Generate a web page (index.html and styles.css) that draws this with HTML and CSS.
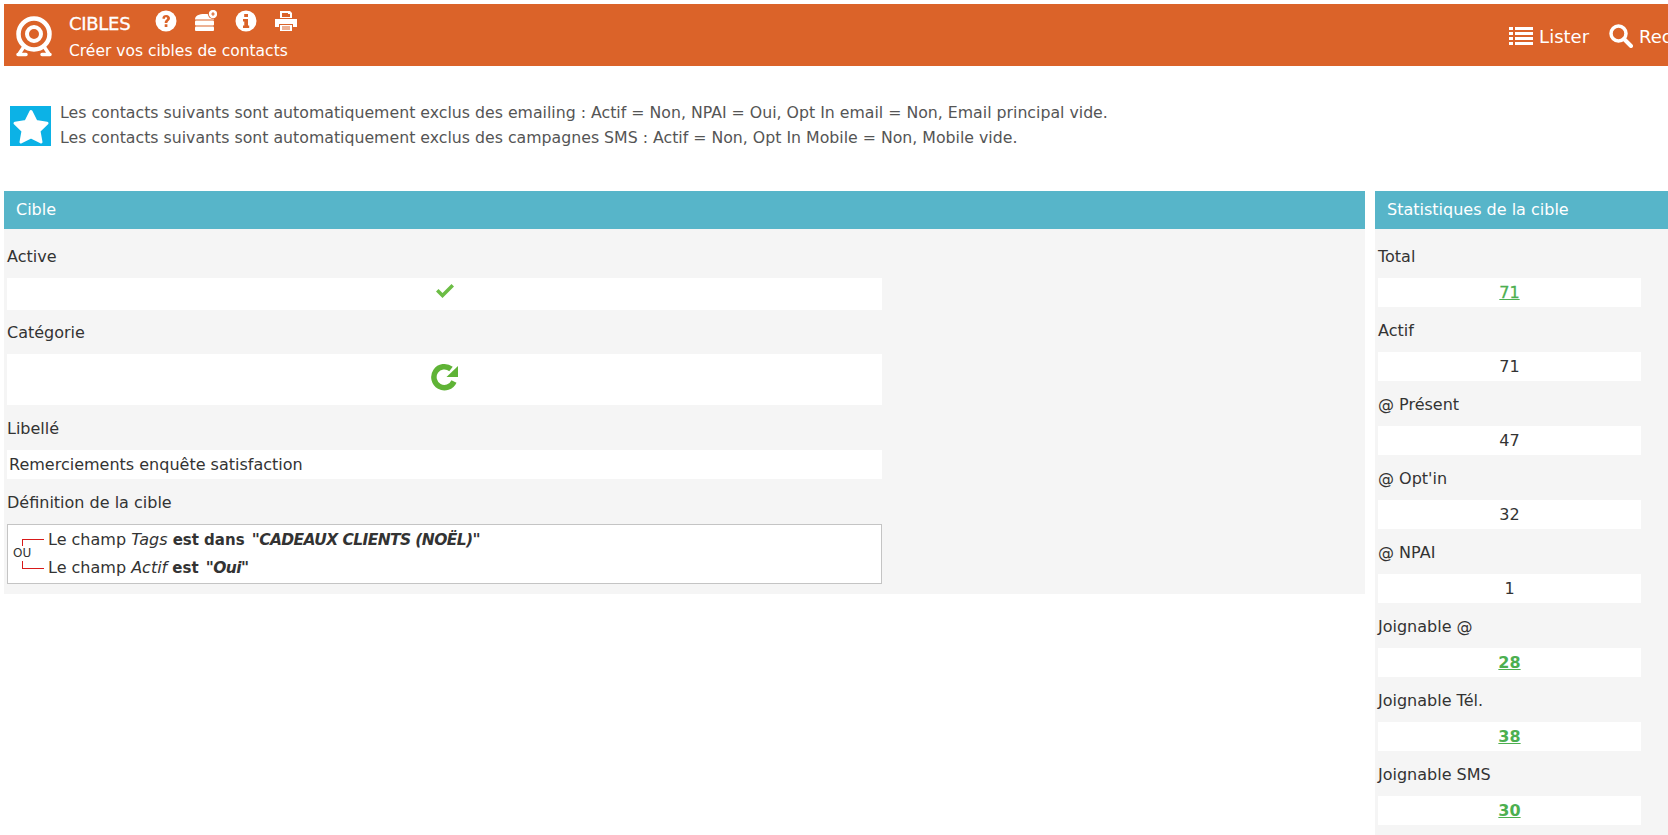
FILE: index.html
```html
<!DOCTYPE html>
<html lang="fr">
<head>
  <meta charset="UTF-8" />
  <title>Cibles</title>
  <link rel="stylesheet" href="styles.css">
</head>
<body>

<div class="page">
  <header class="topbar">
    <svg class="logo" viewBox="0 0 40 44">
      <circle cx="20" cy="19" r="15.5" fill="none" stroke="#fff" stroke-width="4.5"/>
      <circle cx="20" cy="19" r="7" fill="none" stroke="#fff" stroke-width="4"/>
      <path d="M9 33 L5 39 M31 33 L35 39 M4 39.500 H12 M28 39.500 H36" fill="none" stroke="#fff" stroke-width="3.500" stroke-linecap="round"/>
    </svg>
    <div class="titles">
      <div class="title-row">
        <h1>CIBLES</h1>
        <div class="tools">
          <svg viewBox="0 0 22 22"><circle cx="11" cy="11" r="10.500" fill="#fff"/><path d="M7.300 8.500C7.500 6 9 5 11.200 5 13.500 5 15 6.300 15 8.200 15 10.800 12.400 10.800 12.400 13H9.700C9.700 9.800 12.200 9.800 12.200 8.300 12.200 7.500 11.700 7.200 11 7.200 10.200 7.200 9.800 7.800 9.700 8.900ZM9.700 14.300H12.400V17H9.700Z" fill="#db6329"/></svg>
          <svg viewBox="0 0 22 22"><path d="M0 9.500C0 5.500 4 4 9.500 4S19 5.500 19 9.500Z" fill="#fff"/><rect x="0" y="10.500" width="19" height="5" rx="1" fill="#fff"/><rect x="0" y="16.500" width="19" height="4.500" rx="1" fill="#fff"/><circle cx="18" cy="4" r="5" fill="#db6329"/><circle cx="18" cy="4" r="4.200" fill="#fff"/><path d="M16.300 4H19.700M18 2.300V5.700" stroke="#db6329" stroke-width="1.200"/></svg>
          <svg viewBox="0 0 22 22"><circle cx="11" cy="11" r="10.500" fill="#fff"/><path d="M9.200 4H13V7H9.200ZM8 9H13V15.500H14.200V18H8V15.500H9.300V11.500H8Z" fill="#db6329"/></svg>
          <svg viewBox="0 0 22 22"><path d="M5 1H15L17 3V8H5ZM0 9H22V17H18V14H4V17H0ZM5 15H17V21H5Z" fill="#fff"/><path d="M7 3V7H15V4H13V3Z" fill="#db6329"/><path d="M7 17H15M7 19H15" stroke="#db6329"/></svg>
        </div>
      </div>
      <p>Créer vos cibles de contacts</p>
    </div>
    <nav class="actions">
      <a href="#"><svg class="list-icon" viewBox="0 0 24 20"><path d="M0 1H4V4H0ZM6 1H24V4H6ZM0 6H4V9H0ZM6 6H24V9H6ZM0 11H4V14H0ZM6 11H24V14H6ZM0 16H4V19H0ZM6 16H24V19H6Z" fill="#fff"/></svg>Lister</a>
      <a href="#"><svg class="search-icon" viewBox="0 0 24 24"><circle cx="9.500" cy="9.500" r="7.500" fill="none" stroke="#fff" stroke-width="3.500"/><path d="M15 15L22 22" stroke="#fff" stroke-width="4" stroke-linecap="round"/></svg>Rechercher</a>
    </nav>
  </header>

  <div class="notice">
    <div class="notice-icon">
      <svg viewBox="0 0 40 38"><path d="M20 4.500L25 14.500 36 16.200 28 24 30 35 20 29.800 10 35 12 24 4 16.200 15 14.500Z" fill="#fff" stroke="#fff" stroke-width="3" stroke-linejoin="round"/></svg>
    </div>
    <div class="notice-text">
      <p>Les contacts suivants sont automatiquement exclus des emailing : Actif = Non, NPAI = Oui, Opt In email = Non, Email principal vide.</p>
      <p>Les contacts suivants sont automatiquement exclus des campagnes SMS : Actif = Non, Opt In Mobile = Non, Mobile vide.</p>
    </div>
  </div>

  <div class="columns">
    <section class="panel panel-main">
      <h2>Cible</h2>
      <div class="fields">
        <label>Active</label>
        <div class="value value-check">
          <svg class="check" viewBox="0 0 20 16"><path d="M1 8.500L7.500 15 19 3.500 16.500 1 7.500 10 3.500 6Z" fill="#6cbd45"/></svg>
        </div>
        <label>Catégorie</label>
        <div class="value value-icon">
          <svg class="refresh" viewBox="0 0 30 30"><path d="M24 20.500A10.500 10.500 0 1 1 21 8" fill="none" stroke="#5fb336" stroke-width="5.500"/><path d="M28 5V16H16.500Z" fill="#5fb336"/></svg>
        </div>
        <label>Libellé</label>
        <div class="value value-text">Remerciements enquête satisfaction</div>
        <label>Définition de la cible</label>
        <div class="definition">
          <div class="bracket"><span>OU</span></div>
          <div class="rules">
            <div>Le champ <i>Tags</i> <b>est dans</b> <b class="quoted"><i>"CADEAUX CLIENTS (NOËL)"</i></b></div>
            <div>Le champ <i>Actif</i> <b>est</b> <b class="quoted"><i>"Oui"</i></b></div>
          </div>
        </div>
      </div>
    </section>

    <section class="panel panel-stats">
      <h2>Statistiques de la cible</h2>
      <div class="fields stats">
        <label>Total</label>
        <div class="stat"><a href="#" class="light">71</a></div>
        <label>Actif</label>
        <div class="stat">71</div>
        <label>@ Présent</label>
        <div class="stat">47</div>
        <label>@ Opt'in</label>
        <div class="stat">32</div>
        <label>@ NPAI</label>
        <div class="stat">1</div>
        <label>Joignable @</label>
        <div class="stat"><a href="#">28</a></div>
        <label>Joignable Tél.</label>
        <div class="stat"><a href="#">38</a></div>
        <label>Joignable SMS</label>
        <div class="stat"><a href="#">30</a></div>
      </div>
    </section>
  </div>
</div>

</body>
</html>
```

FILE: styles.css
```css
* {
  margin: 0;
  padding: 0;
  box-sizing: border-box;
}

html, body {
  height: 835px;
  overflow: hidden;
  background-color: #fff;
}

body {
  font-family: 'DejaVu Sans', sans-serif;
  font-size: 16px;
  color: #333;
}

.page {
  width: 1755px;
  padding: 4px 0 0 4px;
}

.topbar {
  display: flex;
  align-items: flex-start;
  height: 62px;
  background-color: #db6329;
  color: #fff;
}

.logo {
  width: 40px;
  height: 44px;
  margin: 11px 0 0 10px;
}

.titles {
  margin-left: 15px;
}

.title-row {
  display: flex;
  align-items: flex-start;
}

.title-row h1 {
  width: 86px;
  margin-top: 8px;
  font-size: 18px;
  line-height: 24px;
  font-weight: 400;
  letter-spacing: -0.3px;
  -webkit-text-stroke: 0.3px #fff;
}

.tools {
  display: flex;
  gap: 18px;
  margin-top: 6px;
}

.tools svg {
  width: 22px;
  height: 22px;
}

.titles p {
  margin-top: 5px;
  font-size: 15.500px;
  line-height: 20px;
}

.actions {
  display: flex;
  gap: 20px;
  margin-left: auto;
  padding: 20px 14px 0 0;
}

.actions a {
  display: flex;
  align-items: center;
  gap: 6px;
  height: 24px;
  color: #fff;
  font-size: 18px;
  text-decoration: none;
}

.list-icon {
  width: 24px;
  height: 20px;
}

.search-icon {
  width: 24px;
  height: 24px;
}

.notice {
  display: flex;
  align-items: center;
  gap: 9px;
  height: 50px;
  margin: 35px 0 0 6px;
  color: #555;
  font-size: 15.750px;
  line-height: 25px;
}

.notice-text {
  padding-bottom: 2px;
}

.notice-icon {
  display: flex;
  align-items: center;
  justify-content: center;
  width: 41px;
  height: 40px;
  background-color: #0cb2e6;
}

.notice-icon svg {
  width: 40px;
  height: 38px;
}

.columns {
  display: flex;
  align-items: flex-start;
  gap: 10px;
  margin-top: 40px;
}

.panel {
  background-color: #f5f5f5;
}

.panel h2 {
  height: 38px;
  padding: 0 12px;
  line-height: 37px;
  font-size: 16px;
  font-weight: 400;
  color: #fff;
  background-color: #57b5c9;
}

.panel-main {
  width: 1361px;
}

.panel-stats {
  flex: 1;
  height: 644px;
}

.fields {
  padding: 2px 0 10px 3px;
}

.fields label {
  display: block;
  height: 45px;
  padding-top: 13px;
  line-height: 22px;
}

.fields label:first-child {
  height: 47px;
  padding-top: 15px;
}

.value {
  display: flex;
  align-items: center;
  justify-content: center;
  width: 875px;
  background-color: #fff;
}

.value-check {
  height: 32px;
}

.value-check + label {
  height: 44px;
  padding-top: 12px;
}

.check {
  width: 20px;
  height: 16px;
  margin-top: -7px;
}

.value-icon {
  height: 51px;
}

.refresh {
  width: 30px;
  height: 30px;
  margin-top: -7px;
}

.value-text {
  display: block;
  height: 29px;
  padding-left: 2px;
  line-height: 29px;
}

.definition {
  display: flex;
  width: 875px;
  height: 60px;
  border: 1px solid #c4c4c4;
  background-color: #fff;
}

.bracket {
  position: relative;
  width: 22px;
  height: 30px;
  margin: 14px 0 0 14px;
  border: 1px solid #d81a1a;
  border-right: none;
}

.bracket span {
  position: absolute;
  top: 6px;
  left: -10px;
  padding: 1px 0;
  font-size: 12px;
  line-height: 13px;
  background-color: #fff;
}

.rules {
  margin: 1px 0 0 4px;
}

.rules div {
  height: 28px;
  line-height: 28px;
}

.rules b {
  font-size: 15px;
}

.rules .quoted {
  margin-left: 2px;
  font-size: 15.500px;
  letter-spacing: -0.6px;
}

.stat {
  width: 263px;
  height: 29px;
  line-height: 29px;
  text-align: center;
  background-color: #fff;
}

.stat a {
  color: #4caf50;
  font-weight: 700;
}

.stat a.light {
  font-weight: 400;
  -webkit-text-stroke: 0.3px #4caf50;
}
```
